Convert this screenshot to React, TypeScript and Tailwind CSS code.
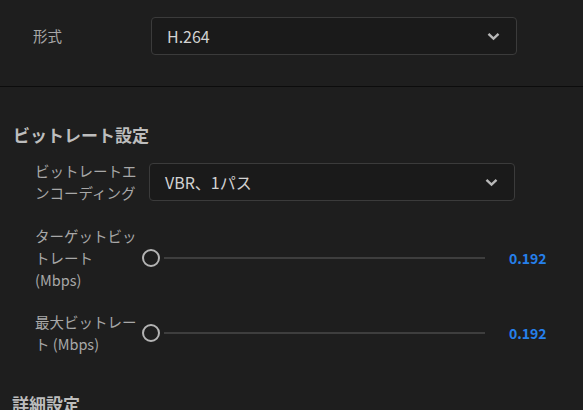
export default function App() {
  return (
    <div className="w-[583px] h-[410px] overflow-hidden bg-[#1e1e1e] font-['Noto_Sans_CJK_JP',sans-serif]">
      {/* Format */}
      <div className="flex items-center pt-[17px] pb-[31px]">
        <div className="w-[151px] pl-[33px] text-[14.5px] text-[#a8a8a8]">形式</div>
        <Select value="H.264" width="w-[366px]" />
      </div>

      <div className="h-px bg-[#0c0c0c]" />

      {/* Bitrate */}
      <div className="pt-[36px]">
        <h2 className="px-[13px] text-[17px] leading-[24px] font-bold text-[#bdbdbd]">ビットレート設定</h2>

        <div className="flex items-center mt-[13px]">
          <Label>ビットレートエンコーディング</Label>
          <div className="w-[7px]" />
          <Select value="VBR、1パス" width="w-[366px]" />
        </div>

        <div className="flex items-center mt-[21px]">
          <Label>ターゲットビットレート (Mbps)</Label>
          <Slider value="0.192" />
        </div>

        <div className="flex items-center mt-[20px]">
          <Label>最大ビットレート (Mbps)</Label>
          <Slider value="0.192" />
        </div>

        <h2 className="mt-[37px] px-[12px] text-[17px] leading-[24px] font-bold text-[#bdbdbd]">詳細設定</h2>
      </div>
    </div>
  );
}

function Label({ children }: { children: React.ReactNode }) {
  return (
    <div className="pl-[35px] w-[142px] shrink-0">
      <div className="w-[106px] text-[14.5px] leading-[22px] text-[#a8a8a8]">{children}</div>
    </div>
  );
}

function Select({ value, width }: { value: string; width: string }) {
  return (
    <div
      className={`${width} h-[38px] flex items-center justify-between rounded-[4px] border border-[#3b3b3b] bg-[#1a1a1a] pl-[15px] pr-[16px]`}
    >
      <span className="text-[16px] text-[#d2d2d2]">{value}</span>
      <svg width="13" height="9" viewBox="0 0 13 9" fill="none">
        <path d="M1.5 1.8 6.5 6.6l5-4.8" stroke="#b8b8b8" strokeWidth="2.4" />
      </svg>
    </div>
  );
}

function Slider({ value }: { value: string }) {
  return (
    <div className="flex items-center">
      <div className="w-[18px] h-[18px] rounded-full border-2 border-[#b4b4b4]" />
      <div className="ml-[4px] w-[321px] h-[2px] bg-[#3e3e3e]" />
      <span className="ml-[24px] text-[14px] font-semibold text-[#2680eb]">{value}</span>
    </div>
  );
}
